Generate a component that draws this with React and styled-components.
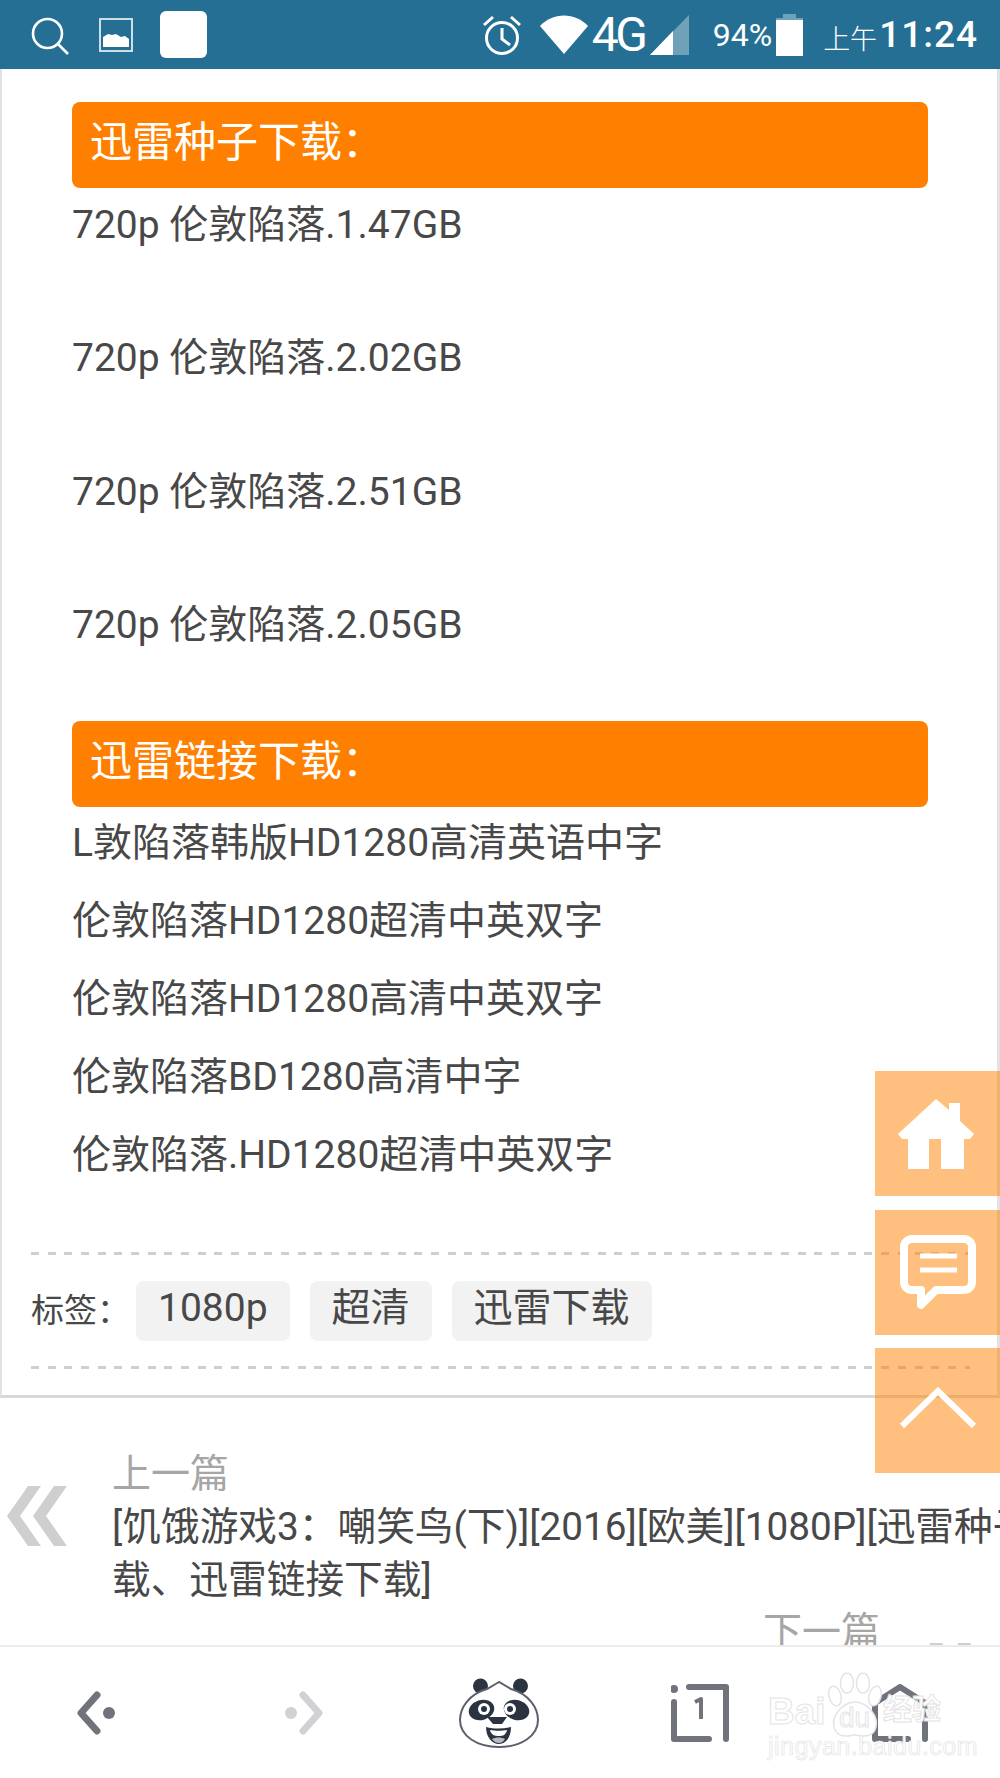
import React from 'react';
import styled, { createGlobalStyle } from 'styled-components';

const GlobalStyle = createGlobalStyle`
  html, body {
    margin: 0;
    padding: 0;
    background: #fff;
  }
  * {
    box-sizing: border-box;
  }
`;

const seedFiles = [
  '720p 伦敦陷落.1.47GB',
  '720p 伦敦陷落.2.02GB',
  '720p 伦敦陷落.2.51GB',
  '720p 伦敦陷落.2.05GB',
];

const linkFiles = [
  'L敦陷落韩版HD1280高清英语中字',
  '伦敦陷落HD1280超清中英双字',
  '伦敦陷落HD1280高清中英双字',
  '伦敦陷落BD1280高清中字',
  '伦敦陷落.HD1280超清中英双字',
];

const tags = ['1080p', '超清', '迅雷下载'];

const App = () => {
  return (
    <Phone>
      <GlobalStyle />
      <StatusBar>
        <StatusLeft>
          <svg width="38" height="38" viewBox="0 0 38 38" fill="none" stroke="#fff" strokeWidth="2.6">
            <circle cx="16.5" cy="16.5" r="14.5" />
            <path d="M27 27l10 10" />
          </svg>
          <svg width="34" height="34" viewBox="0 0 34 34">
            <rect x="1" y="1" width="32" height="32" fill="none" stroke="#cfdfe8" strokeWidth="2" />
            <path d="M4 29V19l5-3 4 1 4-1 5 3 4-1 4 3v8z" fill="#fff" />
          </svg>
          <WhiteSquare />
        </StatusLeft>
        <StatusRight>
          <svg width="40" height="42" viewBox="0 0 40 42" fill="none" stroke="#fff" strokeWidth="3">
            <circle cx="20" cy="24" r="15.5" />
            <path d="M20 14v11l8 6M2 11l9-8M38 11l-9-8" />
          </svg>
          <WifiIcon width="48" height="39" viewBox="0 0 48 39">
            <path d="M0 11C13-3 35-3 48 11L24 39z" fill="#fff" />
          </WifiIcon>
          <NetworkText>4G</NetworkText>
          <SignalIcon width="39" height="40" viewBox="0 0 39 40">
            <path d="M0 40L39 0v40z" fill="#fff" opacity="0.35" />
            <path d="M0 40L23 16v24z" fill="#fff" />
          </SignalIcon>
          <BatteryText>94%</BatteryText>
          <BatteryIcon width="27" height="42" viewBox="0 0 27 42">
            <path d="M7 0h13v4h7v38H0V4h7z" fill="#fff" opacity="0.35" />
            <path d="M0 6h27v36H0z" fill="#fff" />
          </BatteryIcon>
          <Meridiem>上午</Meridiem>
          <Clock>11:24</Clock>
        </StatusRight>
      </StatusBar>

      <Article>
        <SectionTitle>迅雷种子下载：</SectionTitle>
        {seedFiles.map((name) => (
          <SeedRow key={name}>{name}</SeedRow>
        ))}
        <SectionTitle>迅雷链接下载：</SectionTitle>
        {linkFiles.map((name) => (
          <LinkRow key={name}>{name}</LinkRow>
        ))}
        <TagBar>
          <TagLabel>标签：</TagLabel>
          {tags.map((tag) => (
            <Tag key={tag}>{tag}</Tag>
          ))}
        </TagBar>
      </Article>

      <PrevRow>
        <PrevArrow>
          <svg width="60" height="60" viewBox="0 0 60 60" fill="#cfcfcf">
            <path d="M21 0h13L13 30l21 30H21L0 30zM47 0h13L39 30l21 30H47L26 30z" />
          </svg>
        </PrevArrow>
        <div>
          <PagerLabel>上一篇</PagerLabel>
          <PagerTitle>[饥饿游戏3：嘲笑鸟(下)][2016][欧美][1080P][迅雷种子下载、迅雷链接下载]</PagerTitle>
        </div>
      </PrevRow>
      <NextRow>
        <PagerLabel>下一篇</PagerLabel>
        <NextArrow width="46" height="10" viewBox="0 0 46 10" fill="#cfcfcf">
          <path d="M0 0h13l3 4H3zM28 0h13l3 4H31z" />
        </NextArrow>
      </NextRow>

      <FloatingNav>
        <FloatButton>
          <HomeGlyph width="76" height="70" viewBox="0 0 76 70" fill="#fff">
            <path d="M38 0l13 11V4h11v18l14 13-4 5h-6v30H43V40H31v30H10V40H4l-4-5z" />
          </HomeGlyph>
        </FloatButton>
        <FloatButton>
          <ChatGlyph width="76" height="76" viewBox="0 0 76 76" fill="none" stroke="#fff">
            <path
              d="M12 4h52a8 8 0 0 1 8 8v35a8 8 0 0 1-8 8H36L21 70V55h-9a8 8 0 0 1-8-8V12a8 8 0 0 1 8-8z"
              strokeWidth="8"
              strokeLinejoin="round"
            />
            <path d="M20 21h37M20 35h37" strokeWidth="5" />
          </ChatGlyph>
        </FloatButton>
        <FloatButton>
          <UpGlyph width="78" height="42" viewBox="0 0 78 42" fill="none" stroke="#fff" strokeWidth="6">
            <path d="M3 39L39 4l36 35" />
          </UpGlyph>
        </FloatButton>
      </FloatingNav>

      <Toolbar>
        <ToolSlot>
          <svg width="40" height="44" viewBox="0 0 40 44">
            <path d="M20 4L4 22l16 18" fill="none" stroke="#70737c" strokeWidth="7" strokeLinecap="round" strokeLinejoin="round" />
            <circle cx="32" cy="22" r="6" fill="#70737c" />
          </svg>
        </ToolSlot>
        <ToolSlot>
          <svg width="40" height="44" viewBox="0 0 40 44">
            <path d="M20 4l16 18-16 18" fill="none" stroke="#d0d1d4" strokeWidth="7" strokeLinecap="round" strokeLinejoin="round" />
            <circle cx="8" cy="22" r="6" fill="#d0d1d4" />
          </svg>
        </ToolSlot>
        <ToolSlot>
          <svg width="82" height="70" viewBox="0 0 82 70">
            <circle cx="22.5" cy="8" r="7.5" fill="#2b3240" />
            <circle cx="62.5" cy="8" r="7.5" fill="#2b3240" />
            <path d="M41 4L29 11C11 16 2 30 2 42c0 16 17 27 39 27s39-11 39-27c0-12-9-26-27-31z" fill="#fff" stroke="#5b616c" strokeWidth="2" />
            <ellipse cx="23.5" cy="32" rx="13" ry="10" fill="#2b3240" transform="rotate(-18 23.5 32)" />
            <ellipse cx="58.5" cy="32" rx="13" ry="10" fill="#2b3240" transform="rotate(18 58.5 32)" />
            <circle cx="26" cy="31" r="6" fill="#fff" />
            <circle cx="52" cy="31" r="6" fill="#fff" />
            <circle cx="26" cy="31" r="3" fill="#2b3240" />
            <circle cx="52" cy="31" r="3" fill="#2b3240" />
            <path d="M29 39h20l-5 7h-9z" fill="#2b3240" />
            <path d="M28 49c8 2 17 2 25 0 0 10-5 17-12 17s-13-7-13-17z" fill="#2b3240" />
            <path d="M32 52c5 1 12 1 17 0-1 5-4 6-8 6s-8-1-9-6z" fill="#fff" />
            <path d="M34 61c4-2 9-2 13 0-2 3-4 4-6 4s-5-1-7-4z" fill="#b9bcc2" />
          </svg>
        </ToolSlot>
        <ToolSlot>
          <svg width="58" height="58" viewBox="0 0 58 58" fill="none" stroke="#70737c" strokeWidth="6" strokeLinecap="round" strokeLinejoin="round">
            <path d="M3 18v37h35M18 3h37v52" />
            <circle cx="3" cy="5" r="4" fill="#70737c" stroke="none" />
            <path d="M24 18l6-3v20" strokeWidth="4" strokeLinecap="butt" />
          </svg>
        </ToolSlot>
        <ToolSlot>
          <svg width="56" height="58" viewBox="0 0 56 58" fill="none" stroke="#70737c" strokeWidth="6" strokeLinecap="round" strokeLinejoin="round">
            <path d="M3 55V19L28 3l25 16v36M3 55h33" />
          </svg>
        </ToolSlot>
      </Toolbar>

      <Watermark>
        <PawIcon width="56" height="66" viewBox="0 0 56 66" fill="#fff" stroke="#e4e4e4" strokeWidth="1.5">
          <ellipse cx="8" cy="24" rx="6" ry="10" transform="rotate(-15 8 24)" />
          <ellipse cx="20" cy="11" rx="6.5" ry="10" />
          <ellipse cx="36" cy="11" rx="6.5" ry="10" />
          <ellipse cx="48" cy="24" rx="6" ry="10" transform="rotate(15 48 24)" />
          <path d="M28 30c9 0 14 5 18 11 5 7 6 23-9 23-4 0-6-1-9-1s-5 1-9 1c-15 0-14-16-9-23 4-6 9-11 18-11z" />
        </PawIcon>
        <WatermarkBrand>Bai</WatermarkBrand>
        <WatermarkDu>du</WatermarkDu>
        <WatermarkCn>经验</WatermarkCn>
        <WatermarkUrl>jingyan.baidu.com</WatermarkUrl>
      </Watermark>
    </Phone>
  );
};

const Phone = styled.div`
  position: relative;
  width: 1000px;
  height: 1778px;
  overflow: hidden;
  background: #fff;
  color: #484848;
  font-family: Roboto, 'Noto Sans CJK SC', sans-serif;
`;

const StatusBar = styled.div`
  height: 69px;
  background: #266f94;
  display: flex;
  align-items: center;
  justify-content: space-between;
  color: #fff;
`;

const StatusLeft = styled.div`
  display: flex;
  align-items: center;
  gap: 30px;
  padding: 0 0 0 31px;
  svg:first-child {
    margin-top: 2px;
  }
`;

const WhiteSquare = styled.div`
  width: 47px;
  height: 47px;
  margin-left: -3px;
  background: #fff;
  border-radius: 6px;
`;

const StatusRight = styled.div`
  display: flex;
  align-items: center;
  padding-right: 22px;
`;

const WifiIcon = styled.svg`
  margin-left: 18px;
  margin-top: 0;
`;

const NetworkText = styled.span`
  width: 52px;
  margin-left: 4px;
  font-size: 48px;
  font-weight: 400;
  letter-spacing: -3.5px;
  line-height: 50px;
`;

const SignalIcon = styled.svg`
  margin-left: 6px;
`;

const BatteryText = styled.span`
  margin-left: 24px;
  font-size: 32px;
`;

const BatteryIcon = styled.svg`
  margin-left: 4px;
`;

const Meridiem = styled.span`
  margin-left: 20px;
  font-size: 27px;
  font-weight: 300;
  padding-top: 6px;
`;

const Clock = styled.span`
  margin-left: 2px;
  font-size: 37px;
  font-weight: 500;
  letter-spacing: 1px;
`;

const Article = styled.div`
  height: 1329px;
  padding: 33px 0 0 70px;
  border-left: 2px solid #e2e2e2;
  border-right: 3px solid #e2e2e2;
  border-bottom: 3px solid #d8d8d8;
`;

const SectionTitle = styled.div`
  width: 856px;
  height: 86px;
  padding-left: 18px;
  background: #ff7f00;
  border-radius: 8px;
  color: #fff;
  font-size: 42px;
  line-height: 82px;
`;

const SeedRow = styled.div`
  height: 72px;
  margin-bottom: 61.33px;
  font-size: 39px;
  line-height: 74px;
`;

const LinkRow = styled.div`
  height: 72px;
  margin-bottom: 6px;
  font-size: 39px;
  line-height: 73px;
`;

const TagBar = styled.div`
  width: 939px;
  height: 117px;
  margin: 61px 0 0 -41px;
  display: flex;
  align-items: center;
  background-image:
    repeating-linear-gradient(to right, #cfcfcf 0 8px, transparent 8px 16.67px),
    repeating-linear-gradient(to right, #cfcfcf 0 8px, transparent 8px 16.67px);
  background-size: 100% 3px;
  background-position: 0 0, 0 100%;
  background-repeat: no-repeat;
`;

const TagLabel = styled.span`
  width: 105px;
  margin-bottom: 6px;
  font-size: 33px;
`;

const Tag = styled.span`
  height: 60px;
  margin-right: 20px;
  padding: 0 22px;
  background: #f2f2f2;
  border-radius: 8px;
  font-size: 39px;
  line-height: 55px;
`;

const PrevRow = styled.div`
  display: flex;
  margin-top: 50px;
`;

const PrevArrow = styled.div`
  width: 112px;
  flex-shrink: 0;
  padding: 38px 0 0 7px;
`;

const PagerLabel = styled.div`
  color: #a6a6a6;
  font-size: 39px;
  line-height: 52px;
`;

const PagerTitle = styled.div`
  width: 985px;
  color: #484848;
  font-size: 38.7px;
  line-height: 53px;
  word-break: break-all;
`;

const NextRow = styled.div`
  display: flex;
  justify-content: flex-end;
  padding-right: 25px;
  margin-top: 0;
`;

const NextArrow = styled.svg`
  margin: 37px 0 0 49px;
`;

const FloatingNav = styled.div`
  position: absolute;
  top: 1071px;
  right: 0;
  width: 125px;
  display: flex;
  flex-direction: column;
  gap: 13.5px;
`;

const FloatButton = styled.div`
  height: 125px;
  background: rgba(255, 127, 0, 0.5);
  display: flex;
  align-items: center;
  justify-content: center;
`;

const HomeGlyph = styled.svg`
  margin-right: 4px;
`;

const ChatGlyph = styled.svg`
  margin-top: 2px;
`;

const UpGlyph = styled.svg`
  margin-bottom: 6px;
`;

const Toolbar = styled.div`
  position: absolute;
  left: 0;
  right: 0;
  bottom: 0;
  height: 133px;
  display: flex;
  align-items: center;
  background: #fff;
  border-top: 2px solid #ececec;
`;

const ToolSlot = styled.div`
  width: 200px;
  display: flex;
  justify-content: center;
  &:nth-child(1) {
    margin-left: -3px;
  }
  &:nth-child(2) {
    margin-left: 6px;
  }
  &:nth-child(3) {
    margin-left: -3px;
  }
  &:nth-child(4) {
    margin-left: 1px;
  }
`;

const Watermark = styled.div`
  position: absolute;
  left: 768px;
  top: 1672px;
  width: 180px;
  height: 86px;
  font-family: 'Liberation Sans', 'Noto Sans CJK SC', sans-serif;
`;

const PawIcon = styled.svg`
  position: absolute;
  left: 59px;
  top: 0;
`;

const WatermarkText = styled.span`
  position: absolute;
  white-space: nowrap;
  color: #fff;
  -webkit-text-stroke: 1px #e4e4e4;
`;

const WatermarkBrand = styled(WatermarkText)`
  left: 0;
  top: 19px;
  font-size: 37px;
  font-weight: 700;
`;

const WatermarkDu = styled(WatermarkText)`
  left: 71px;
  top: 30px;
  font-size: 28px;
`;

const WatermarkCn = styled(WatermarkText)`
  left: 115px;
  top: 17px;
  font-size: 29px;
  line-height: 42px;
  font-weight: 700;
`;

const WatermarkUrl = styled(WatermarkText)`
  left: 0;
  top: 60px;
  font-size: 25px;
  -webkit-text-stroke: 0.7px #e4e4e4;
  letter-spacing: 0.5px;
`;

export default App;
